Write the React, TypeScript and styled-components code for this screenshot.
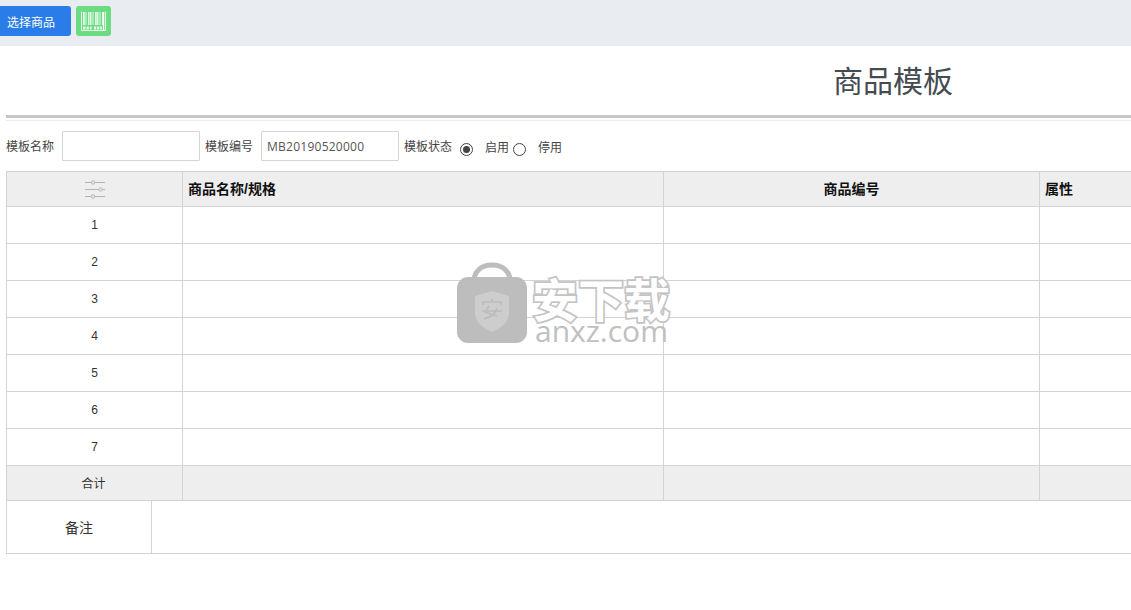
import React from 'react';
import styled, { createGlobalStyle } from 'styled-components';

const rows = [1, 2, 3, 4, 5, 6, 7];

const App = () => {
  return (
    <>
      <GlobalStyle />
      <Wrap>
        <Toolbar>
          <PickButton>选择商品</PickButton>
          <ScanButton aria-label="barcode">
            <svg width="25" height="20" viewBox="0 0 25 20">
              <g fill="none" stroke="#fff" strokeWidth="0.8">
                <path d="M.5 .5v19h24V.5" />
                <path d="M3 1v13M5 1v13M7.5 1v13M10 1v13M12 1v13M14.5 1v13M17 1v13M19 1v13M21.5 1v13" />
              </g>
              <g fill="#fff">
                <path d="M2.2 1h1.2v13H2.2zM8.6 1h1.2v13H8.6zM15.4 1h1.2v13h-1.2zM22 1h1.2v18H22z" />
                <path d="M2 15.5h2.4v3H2zM5.4 15.5h2.4v3H5.4zM8.8 15.5h1.8v3H8.8zM13 15.5h2.2v3H13zM16 15.5h2.2v3H16zM19 15.5h2.2v3H19z" opacity="0.85" />
              </g>
            </svg>
          </ScanButton>
        </Toolbar>
        <Sheet>
          <Title>商品模板</Title>
          <DoubleRule />
          <FormRow>
            <FieldLabel>模板名称</FieldLabel>
            <TextField type="text" />
            <FieldLabel>模板编号</FieldLabel>
            <TextField type="text" defaultValue="MB20190520000" />
            <FieldLabel>模板状态</FieldLabel>
            <RadioGroup>
              <RadioDot $checked />
              <RadioText>启用</RadioText>
              <RadioDot />
              <RadioText>停用</RadioText>
            </RadioGroup>
          </FormRow>
          <GoodsTable>
            <colgroup>
              <col style={{ width: 176 }} />
              <col style={{ width: 481 }} />
              <col style={{ width: 376 }} />
              <col />
            </colgroup>
            <thead>
              <tr>
                <HeadCell $align="center">
                  <SettingsIcon width="20" height="19" viewBox="0 0 20 19">
                    <g stroke="#b4b4b4" strokeWidth="1" fill="#eee">
                      <path d="M0 2.5h20M0 9.5h20M0 16.5h20" />
                      <circle cx="8" cy="2.5" r="1.7" />
                      <circle cx="15.5" cy="9.5" r="1.7" />
                      <circle cx="8" cy="16.5" r="1.7" />
                    </g>
                  </SettingsIcon>
                </HeadCell>
                <HeadCell>商品名称/规格</HeadCell>
                <HeadCell $align="center">商品编号</HeadCell>
                <HeadCell>属性</HeadCell>
              </tr>
            </thead>
            <tbody>
              {rows.map((n) => (
                <tr key={n}>
                  <BodyCell>{n}</BodyCell>
                  <BodyCell />
                  <BodyCell />
                  <BodyCell />
                </tr>
              ))}
              <tr>
                <TotalCell>合计</TotalCell>
                <TotalCell />
                <TotalCell />
                <TotalCell />
              </tr>
            </tbody>
          </GoodsTable>
          <RemarkRow>
            <RemarkLabel>备注</RemarkLabel>
            <RemarkBody />
          </RemarkRow>
        </Sheet>
        <Watermark>
          <svg width="72" height="82" viewBox="0 0 72 82">
            <path d="M17 22C18 8 26 3 36 3s18 5 19 19" fill="none" stroke="#bdbdbd" strokeWidth="5" />
            <rect x="1" y="15" width="70" height="66" rx="11" fill="#bdbdbd" />
            <path d="M36 29l17 5v17c0 9-8 15-17 19-9-4-17-10-17-19V34z" fill="#cdcdcd" />
            <path d="M36 37v3M27 43v-3h18v3M33 44l-4 6 12 4M41 46c-1 6-6 9-13 11M26 49h20" fill="none" stroke="#bcbcbc" strokeWidth="1.6" />
          </svg>
          <WatermarkText>
            <WatermarkTitle>安下载</WatermarkTitle>
            <WatermarkUrl>anxz.com</WatermarkUrl>
          </WatermarkText>
        </Watermark>
      </Wrap>
    </>
  );
};

export default App;

const GlobalStyle = createGlobalStyle`
  html, body {
    margin: 0;
    padding: 0;
    background: #fff;
    overflow: hidden;
  }
  body {
    font-family: "Liberation Sans", "Noto Sans CJK SC", sans-serif;
    font-size: 12px;
    color: #333;
  }
`;

const Wrap = styled.div`
  position: relative;
  width: 1131px;
  height: 610px;
  overflow: hidden;
`;

const Toolbar = styled.div`
  display: flex;
  align-items: flex-start;
  gap: 5px;
  height: 46px;
  padding-top: 6px;
  box-sizing: border-box;
  background-color: #e9edf1;
`;

const PickButton = styled.button`
  width: 71px;
  height: 30px;
  padding: 0 0 0 7px;
  border: 0;
  border-radius: 0 3px 3px 0;
  background-color: #2a7de9;
  color: #fff;
  font-family: inherit;
  font-size: 12px;
  text-align: left;
`;

const ScanButton = styled.button`
  display: flex;
  align-items: center;
  justify-content: center;
  width: 35px;
  height: 30px;
  padding: 0;
  border: 0;
  border-radius: 3px;
  background-color: #6cdc82;
`;

const Sheet = styled.div`
  width: 1776px;
  margin-left: 6px;
`;

const Title = styled.h1`
  margin: 0;
  height: 69px;
  padding-right: 2px;
  font-size: 30px;
  font-weight: 400;
  line-height: 72px;
  text-align: center;
  color: #444c52;
`;

const DoubleRule = styled.div`
  height: 2px;
  border-top: 3px solid #c6c6c6;
  border-bottom: 1px solid #ececec;
  margin-bottom: 10px;
`;

const FormRow = styled.div`
  display: flex;
  align-items: center;
  height: 30px;
  margin-bottom: 10px;
`;

const FieldLabel = styled.span`
  margin: 0 5px 0 0;
  position: relative;
  top: -1px;
  color: #444;
  white-space: nowrap;
`;

const TextField = styled.input`
  width: 138px;
  height: 30px;
  margin: 0 5px 0 3px;
  padding: 0 5px;
  box-sizing: border-box;
  border: 1px solid #d5d5d5;
  border-radius: 1px;
  font-family: "Open Sans", "Liberation Sans", sans-serif;
  font-size: 12px;
  letter-spacing: 0.25px;
  color: #555;
  outline: none;
`;

const RadioGroup = styled.div`
  display: flex;
  align-items: center;
  padding-left: 3px;
  margin-top: 1px;
`;

const RadioDot = styled.span<{ $checked?: boolean }>`
  display: flex;
  align-items: center;
  justify-content: center;
  width: 13px;
  height: 13px;
  box-sizing: border-box;
  border: 1px solid #444;
  border-radius: 50%;
  margin-top: 5px;
  &::after {
    content: '';
    display: ${(props) => (props.$checked ? 'block' : 'none')};
    width: 7px;
    height: 7px;
    border-radius: 50%;
    background-color: #444;
  }
`;

const RadioText = styled.span`
  margin: 0 0 0 12px;
  width: 28px;
  color: #444;
  &:last-child {
    width: auto;
  }
`;

const GoodsTable = styled.table`
  width: 1776px;
  table-layout: fixed;
  border-collapse: collapse;
  border: 1px solid #d3d3d3;
`;

const HeadCell = styled.th<{ $align?: string }>`
  height: 35px;
  padding: 0 5px 2px;
  box-sizing: border-box;
  background-color: #eee;
  border: 1px solid #d3d3d3;
  font-size: 14px;
  font-weight: 700;
  color: #111;
  text-align: ${(props) => props.$align || 'left'};
`;

const SettingsIcon = styled.svg`
  display: block;
  margin: 3px auto 0;
`;

const BodyCell = styled.td`
  height: 37px;
  padding: 0;
  box-sizing: border-box;
  border: 1px solid #d3d3d3;
  text-align: center;
  color: #333;
`;

const TotalCell = styled(BodyCell)`
  height: 35px;
  padding: 0 2px 2px 0;
  background-color: #eee;
`;

const RemarkRow = styled.div`
  display: flex;
  height: 53px;
  box-sizing: border-box;
  border: 1px solid #d3d3d3;
  border-top: 0;
`;

const RemarkLabel = styled.div`
  display: flex;
  align-items: center;
  justify-content: center;
  width: 145px;
  box-sizing: border-box;
  border-right: 1px solid #d3d3d3;
  font-size: 14px;
  color: #333;
`;

const RemarkBody = styled.div`
  flex: 1;
`;

const Watermark = styled.div`
  position: absolute;
  left: 456px;
  top: 262px;
  display: flex;
  align-items: flex-start;
  gap: 4px;
  pointer-events: none;
`;

const WatermarkText = styled.div`
  display: flex;
  flex-direction: column;
  padding-top: 15px;
`;

const WatermarkTitle = styled.div`
  font-family: "Noto Sans CJK SC", sans-serif;
  font-size: 46px;
  font-weight: 700;
  line-height: 41px;
  color: #fff;
  -webkit-text-stroke: 3.5px #c4c4c4;
  paint-order: stroke fill;
`;

const WatermarkUrl = styled.div`
  font-family: "Open Sans", sans-serif;
  font-size: 30px;
  line-height: 26px;
  padding-left: 3px;
  color: #c0c0c0;
`;
